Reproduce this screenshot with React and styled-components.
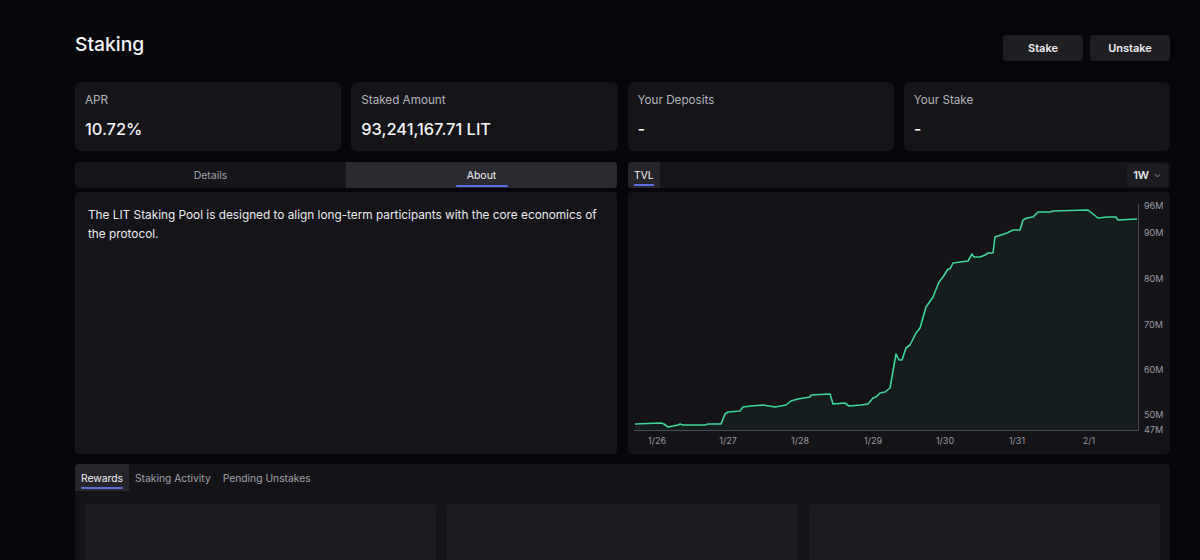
import styled, { createGlobalStyle } from "styled-components";

const GlobalStyle = createGlobalStyle`
  html, body {
    margin: 0;
    padding: 0;
    background: #07070b;
    color: #ececf0;
    font-family: Inter, "Noto Sans", sans-serif;
  }
  * { box-sizing: border-box; }
`;

const stats = [
  { label: "APR", value: "10.72%" },
  { label: "Staked Amount", value: "93,241,167.71 LIT" },
  { label: "Your Deposits", value: "-" },
  { label: "Your Stake", value: "-" },
];

const points = [
  [7, 232], [33, 231], [36, 232], [40, 235], [50, 233], [52, 232], [55, 233],
  [77, 233], [80, 232], [93, 232], [97, 222], [100, 220], [112, 219], [115, 215],
  [123, 214], [135, 213], [147, 215], [158, 213], [163, 209], [170, 207], [182, 205],
  [183, 203], [202, 202], [205, 212], [217, 211], [221, 214], [233, 213], [240, 212],
  [245, 206], [248, 205], [252, 201], [257, 200], [262, 196], [268, 162], [271, 168],
  [274, 168], [278, 156], [282, 153], [288, 141], [292, 136], [298, 115], [305, 105],
  [311, 90], [315, 85], [320, 77], [322, 77], [325, 71], [340, 69], [344, 62],
  [346, 65], [352, 65], [357, 63], [360, 61], [365, 61], [367, 45], [379, 41],
  [385, 38], [392, 38], [395, 28], [399, 26], [405, 25], [410, 20], [422, 20],
  [425, 19], [460, 18], [470, 26], [479, 25], [488, 25], [490, 28], [509, 27],
];

const yTicks = [
  ["96M", 14], ["90M", 41], ["80M", 87], ["70M", 133], ["60M", 178], ["50M", 223], ["47M", 238],
];
const xTicks = [
  ["1/26", 29], ["1/27", 100], ["1/28", 172], ["1/29", 245], ["1/30", 317], ["1/31", 389], ["2/1", 461],
];

const TvlChart = () => {
  const line = points.map(([x, y], i) => `${i ? "L" : "M"}${x} ${y}`).join(" ");
  const area = `${line} L509 238 L7 238 Z`;
  return (
    <svg width="542" height="262" viewBox="0 0 542 262">
      <path d={area} fill="#3ddc97" fillOpacity="0.05" />
      <path d={line} fill="none" stroke="#3fd69a" strokeWidth="1.6" strokeLinejoin="round" />
      <line x1="6" y1="238.5" x2="510.5" y2="238.5" stroke="#4a4c53" />
      <line x1="510.5" y1="12" x2="510.5" y2="238.5" stroke="#4a4c53" />
      {yTicks.map(([t, y]) => (
        <text key={t} x="516" y={y + 3} fill="#9c9da4" fontSize="9" fontFamily="Inter, sans-serif">
          {t}
        </text>
      ))}
      {xTicks.map(([t, x]) => (
        <text key={t} x={x} y="252" fill="#9c9da4" fontSize="9" textAnchor="middle" fontFamily="Inter, sans-serif">
          {t}
        </text>
      ))}
    </svg>
  );
};

const App = () => {
  return (
    <>
      <GlobalStyle />
      <Page>
        <Header>
          <Title>Staking</Title>
          <Actions>
            <ActionButton>Stake</ActionButton>
            <ActionButton>Unstake</ActionButton>
          </Actions>
        </Header>

        <StatGrid>
          {stats.map((s) => (
            <StatCard key={s.label}>
              <StatLabel>{s.label}</StatLabel>
              <StatValue>{s.value}</StatValue>
            </StatCard>
          ))}
        </StatGrid>

        <MiddleRow>
          <Column>
            <TabBar>
              <HalfTab>Details</HalfTab>
              <HalfTab active>About</HalfTab>
            </TabBar>
            <Panel>
              <AboutText>
                The LIT Staking Pool is designed to align long-term participants with the core economics of
                the protocol.
              </AboutText>
            </Panel>
          </Column>
          <Column>
            <TabBar>
              <SmallTab active>TVL</SmallTab>
              <RangeSelect>
                1W
                <svg width="9" height="9" viewBox="0 0 10 10">
                  <path d="M2 3.5 L5 6.5 L8 3.5" fill="none" stroke="#a0a1a8" strokeWidth="1" />
                </svg>
              </RangeSelect>
            </TabBar>
            <ChartPanel>
              <TvlChart />
            </ChartPanel>
          </Column>
        </MiddleRow>

        <BottomPanel>
          <BottomTabs>
            <SmallTab active>Rewards</SmallTab>
            <SmallTab>Staking Activity</SmallTab>
            <SmallTab>Pending Unstakes</SmallTab>
          </BottomTabs>
          <RewardGrid>
            <RewardCard />
            <RewardCard />
            <RewardCard />
          </RewardGrid>
        </BottomPanel>
      </Page>
    </>
  );
};

export default App;

const Page = styled.div`
  width: 1095px;
  margin-left: 75px;
  padding-top: 32px;
  height: 560px;
  overflow: hidden;
`;

const Header = styled.div`
  display: flex;
  justify-content: space-between;
  align-items: flex-start;
  height: 29px;
`;

const Title = styled.h1`
  margin: 0;
  font-size: 19.3px;
  line-height: 24px;
  font-weight: 500;
  color: #f4f4f6;
`;

const Actions = styled.div`
  display: flex;
  gap: 7px;
  margin-top: 3px;
`;

const ActionButton = styled.button`
  width: 80px;
  height: 26px;
  border: none;
  border-radius: 4px;
  background: #1e1e23;
  color: #f0f0f3;
  font-family: Inter, sans-serif;
  font-size: 11px;
  font-weight: 600;
  cursor: pointer;
`;

const StatGrid = styled.div`
  display: grid;
  grid-template-columns: repeat(4, 1fr);
  gap: 10px;
  margin-top: 21px;
`;

const StatCard = styled.div`
  height: 69px;
  background: #141419;
  border-radius: 6px;
  padding: 11px 10px;
`;

const StatLabel = styled.div`
  font-size: 11.7px;
  line-height: 15px;
  color: #b4b4bb;
`;

const StatValue = styled.div`
  margin-top: 11px;
  font-size: 16.4px;
  line-height: 20px;
  font-weight: 500;
  color: #f5f5f7;
`;

const MiddleRow = styled.div`
  display: grid;
  grid-template-columns: 1fr 1fr;
  gap: 11px;
  margin-top: 11px;
`;

const Column = styled.div`
  display: flex;
  flex-direction: column;
  gap: 4px;
`;

const TabBar = styled.div`
  height: 26px;
  display: flex;
  align-items: stretch;
  justify-content: space-between;
  background: #141419;
  border-radius: 4px;
  overflow: hidden;
`;

const HalfTab = styled.div`
  flex: 1;
  position: relative;
  display: flex;
  align-items: center;
  justify-content: center;
  font-size: 10.5px;
  color: ${(p) => (p.active ? "#f2f2f5" : "#a3a4ab")};
  background: ${(p) => (p.active ? "#2a2a30" : "transparent")};

  &::after {
    content: "";
    display: ${(p) => (p.active ? "block" : "none")};
    position: absolute;
    bottom: 1px;
    left: 50%;
    width: 52px;
    margin-left: -26px;
    height: 2px;
    border-radius: 1px;
    background: #5b6fe0;
  }
`;

const SmallTab = styled.div`
  position: relative;
  display: flex;
  align-items: center;
  padding: 0 6px;
  font-size: 10.3px;
  color: ${(p) => (p.active ? "#f2f2f5" : "#a3a4ab")};
  background: ${(p) => (p.active ? "#25252b" : "transparent")};

  &::after {
    content: "";
    display: ${(p) => (p.active ? "block" : "none")};
    position: absolute;
    bottom: 2px;
    left: 6px;
    right: 6px;
    height: 2px;
    border-radius: 1px;
    background: #5b6fe0;
  }
`;

const RangeSelect = styled.div`
  display: flex;
  align-items: center;
  gap: 4px;
  margin: 2px 2px 2px 0;
  padding: 0 6px;
  border-radius: 3px;
  background: #1c1c21;
  font-size: 11px;
  font-weight: 600;
  color: #eaeaee;
`;

const Panel = styled.div`
  height: 262px;
  background: #141419;
  border-radius: 4px;
  padding: 14px 13px;
`;

const ChartPanel = styled.div`
  height: 262px;
  background: #131318;
  border-radius: 4px;
  overflow: hidden;
`;

const AboutText = styled.p`
  margin: 0;
  font-size: 11.8px;
  line-height: 19px;
  color: #ececf0;
`;

const BottomPanel = styled.div`
  margin-top: 10px;
  background: #131318;
  border-radius: 4px 4px 0 0;
  height: 120px;
`;

const BottomTabs = styled.div`
  display: flex;
  height: 27px;
  align-items: stretch;

  & > div:first-child {
    border-top-left-radius: 4px;
  }
`;

const RewardGrid = styled.div`
  display: grid;
  grid-template-columns: repeat(3, 1fr);
  gap: 11px;
  padding: 13px 10px 0;
`;

const RewardCard = styled.div`
  height: 80px;
  background: #1b1b20;
  border-radius: 3px;
`;
